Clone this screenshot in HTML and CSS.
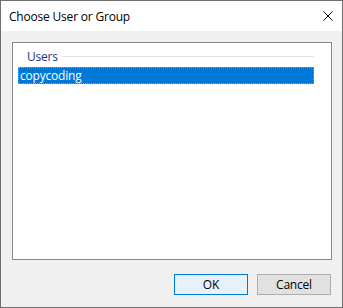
FILE: index.html
```html
<!DOCTYPE html>
<html lang="en">

<head>
  <meta charset="UTF-8">
  <meta name="viewport" content="width=device-width, initial-scale=1.0">
  <title>Choose User or Group</title>
  <link rel="stylesheet" href="styles.css">
</head>

<body>
  <div class="window">
    <div class="titlebar">
      <span class="title">Choose User or Group</span>
      <span class="close">
        <svg width="10" height="10" viewBox="0 0 10 10">
          <path d="M0.5 0.5 L9.5 9.5 M9.5 0.5 L0.5 9.5" stroke="#000" stroke-width="1" fill="none" />
        </svg>
      </span>
    </div>
    <div class="body">
      <div class="listbox">
        <div class="group-header">
          <span class="group-name">Users</span>
          <span class="group-line"></span>
        </div>
        <div class="item selected">copycoding</div>
      </div>
      <div class="buttons">
        <button class="btn btn-default">OK</button>
        <button class="btn">Cancel</button>
      </div>
    </div>
  </div>
</body>

</html>
```

FILE: styles.css
```css
* {
  padding: 0;
  margin: 0;
  box-sizing: border-box;
}

body {
  font-family: "Open Sans", "Liberation Sans", sans-serif;
  font-size: 12px;
  color: #000;
  background: #fff;
}

.window {
  width: 343px;
  height: 308px;
  border: 1px solid #707070;
  display: flex;
  flex-direction: column;
  background: #f0f0f0;
}

.titlebar {
  height: 30px;
  background: #fff;
  display: flex;
  align-items: center;
  justify-content: space-between;
  padding: 0 9px 0 8px;
}

.title {
  font-size: 12px;
  letter-spacing: -0.2px;
}

.close {
  display: flex;
  width: 10px;
  height: 10px;
  margin-right: 0;
}

.body {
  flex: 1;
  padding: 11px 11px 12px 11px;
  display: flex;
  flex-direction: column;
}

.listbox {
  width: 320px;
  height: 218px;
  background: #fff;
  border: 1px solid #828790;
  padding: 4px 17px 0 5px;
}

.group-header {
  display: flex;
  align-items: center;
  height: 18px;
  padding-left: 9px;
}

.group-name {
  color: #1e3287;
  font-size: 12px;
  letter-spacing: -0.2px;
}

.group-line {
  flex: 1;
  height: 1px;
  background: #e2e2e2;
  margin-left: 4px;
  margin-top: 1px;
}

.item {
  height: 17px;
  line-height: 15px;
  padding-left: 1px;
  margin-top: 2px;
  letter-spacing: -0.2px;
}

.selected {
  background: #0078d7;
  color: #fff;
  border: 1px dotted #ff8c28;
}

.buttons {
  margin-top: 14px;
  display: flex;
  justify-content: flex-end;
  gap: 9px;
}

.btn {
  width: 74px;
  height: 21px;
  font-family: "Open Sans", "Liberation Sans", sans-serif;
  font-size: 12px;
  letter-spacing: -0.2px;
  color: #000;
  background: #e1e1e1;
  border: 1px solid #adadad;
}

.btn-default {
  background: #e5f1fb;
  border-color: #0078d7;
}
```
